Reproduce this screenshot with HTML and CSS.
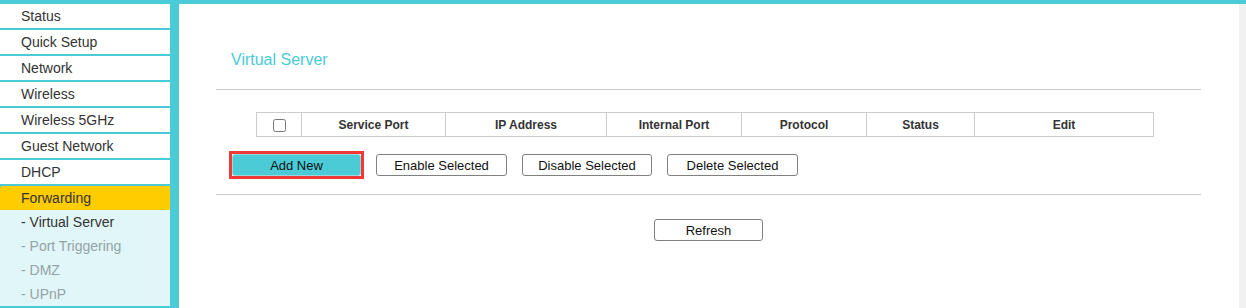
FILE: index.html
```html
<!DOCTYPE html>
<html lang="en">
<head>
    <meta charset="UTF-8">
    <title>Virtual Server</title>
    <link rel="stylesheet" href="styles.css">
</head>
<body>
    <div class="page">
        <ul class="menu">
            <li class="menu-item">Status</li>
            <li class="menu-item">Quick Setup</li>
            <li class="menu-item">Network</li>
            <li class="menu-item">Wireless</li>
            <li class="menu-item">Wireless 5GHz</li>
            <li class="menu-item">Guest Network</li>
            <li class="menu-item">DHCP</li>
            <li class="menu-item active">Forwarding</li>
            <li class="submenu">
                <div class="sub-item current">- Virtual Server</div>
                <div class="sub-item">- Port Triggering</div>
                <div class="sub-item">- DMZ</div>
                <div class="sub-item">- UPnP</div>
            </li>
        </ul>

        <div class="main">
            <h2 class="title">Virtual Server</h2>
            <hr class="line">

            <table class="list">
                <colgroup>
                    <col class="col-check">
                    <col class="col-port">
                    <col class="col-ip">
                    <col class="col-internal">
                    <col class="col-proto">
                    <col class="col-status">
                    <col class="col-edit">
                </colgroup>
                <tr>
                    <th><input type="checkbox"></th>
                    <th>Service Port</th>
                    <th>IP Address</th>
                    <th>Internal Port</th>
                    <th>Protocol</th>
                    <th>Status</th>
                    <th>Edit</th>
                </tr>
            </table>

            <div class="actions">
                <span class="highlight"><button class="btn btn-add">Add New</button></span>
                <button class="btn btn-enable">Enable Selected</button>
                <button class="btn btn-disable">Disable Selected</button>
                <button class="btn btn-delete">Delete Selected</button>
            </div>

            <hr class="line line-bottom">

            <div class="refresh-row">
                <button class="btn btn-refresh">Refresh</button>
            </div>
        </div>

        <div class="scrollbar"></div>
    </div>
</body>
</html>
```

FILE: styles.css
```css
html, body {
    margin: 0;
    height: 100%;
}
body {
    background-color: #4acbd6;
    font-family: "Liberation Sans", Arial, sans-serif;
    color: #333;
    padding-top: 4px;
    box-sizing: border-box;
    overflow: hidden;
}
.page {
    display: flex;
    height: 100%;
}
.menu {
    list-style: none;
    margin: 0 9px 0 0;
    padding: 0;
    width: 170px;
    flex-shrink: 0;
}
.menu-item {
    height: 24px;
    line-height: 24px;
    margin-bottom: 2px;
    padding-left: 21px;
    font-size: 14px;
    background-color: white;
}
.menu-item.active {
    background-color: #ffcc00;
    border-radius: 3px 0 0 0;
    margin-bottom: 0;
}
.submenu {
    background-color: #e1f6f8;
}
.sub-item {
    height: 24px;
    line-height: 24px;
    padding-left: 21px;
    font-size: 14px;
    color: #93a3a6;
}
.sub-item.current {
    color: #333;
}
.main {
    flex: 1;
    background-color: white;
    padding: 0 38px 0 37px;
}
.title {
    margin: 0;
    padding: 44px 0 0 15px;
    height: 24px;
    line-height: 24px;
    font-size: 16px;
    font-weight: normal;
    color: #4acbd6;
}
.line {
    margin: 17px 0 0 0;
    border: none;
    border-top: 1px solid #ccc;
    height: 0;
}
.list {
    border-collapse: collapse;
    table-layout: fixed;
    margin: 22px 0 0 40px;
    width: 897px;
}
.list th {
    border: 1px solid #ccc;
    height: 23px;
    padding: 0;
    font-size: 12px;
    font-weight: bold;
    color: #333;
    text-align: center;
}
.list input {
    margin: 0;
    width: 13px;
    height: 13px;
    vertical-align: middle;
}
.col-check { width: 45px; }
.col-port { width: 144px; }
.col-ip { width: 161px; }
.col-internal { width: 135px; }
.col-proto { width: 125px; }
.col-status { width: 108px; }
.col-edit { width: 179px; }
.actions {
    display: flex;
    align-items: center;
    margin: 14px 0 0 13px;
}
.highlight {
    display: inline-flex;
    border: 3px solid #f03a3a;
    margin-right: 12px;
}
.btn {
    height: 22px;
    padding: 0;
    font-family: "Liberation Sans", Arial, sans-serif;
    font-size: 13px;
    color: #111;
    background-color: white;
    border: 1px solid #808080;
    border-radius: 3px;
}
.btn-add {
    width: 129px;
    background-color: #4acbd6;
    border-color: #9ad6dc;
}
.btn-enable { width: 131px; margin-right: 15px; }
.btn-disable { width: 130px; margin-right: 15px; }
.btn-delete { width: 131px; }
.line-bottom {
    margin-top: 15px;
}
.refresh-row {
    display: flex;
    justify-content: center;
    margin-top: 24px;
}
.btn-refresh {
    width: 109px;
}
.scrollbar {
    width: 7px;
    background-color: #f1f1f1;
    flex-shrink: 0;
}
```
